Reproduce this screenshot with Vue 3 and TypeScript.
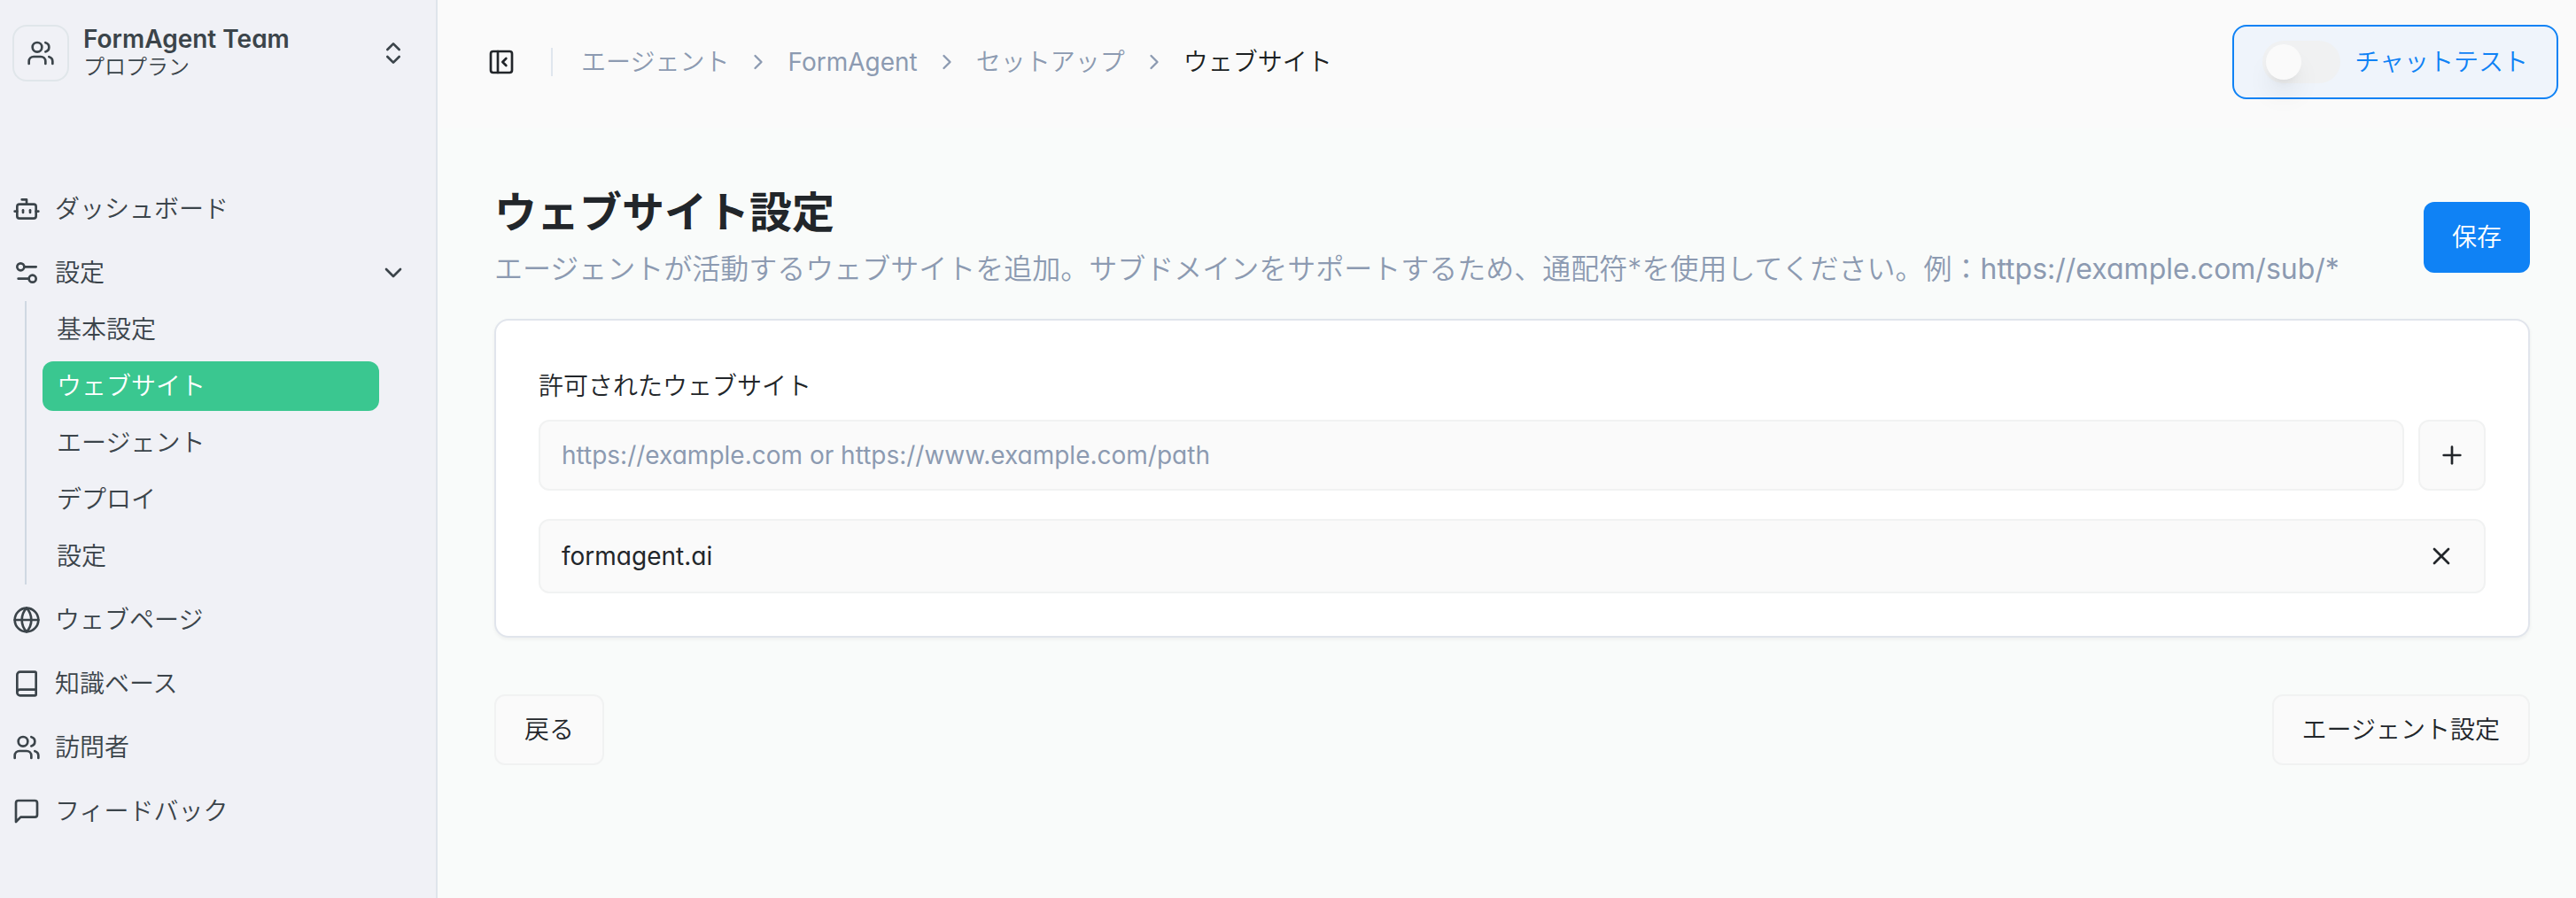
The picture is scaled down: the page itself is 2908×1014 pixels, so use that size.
<script setup lang="ts">
import { ref } from 'vue'

interface NavItem {
  label: string
  icon: string
  children?: { label: string; active?: boolean }[]
}

const icons: Record<string, string> = {
  users:
    '<path d="M16 21v-2a4 4 0 0 0-4-4H6a4 4 0 0 0-4 4v2"/><circle cx="9" cy="7" r="4"/><path d="M22 21v-2a4 4 0 0 0-3-3.87"/><path d="M16 3.13a4 4 0 0 1 0 7.75"/>',
  bot: '<path d="M12 8V4H8"/><rect width="16" height="12" x="4" y="8" rx="2"/><path d="M2 14h2"/><path d="M20 14h2"/><path d="M15 13v2"/><path d="M9 13v2"/>',
  settings: '<path d="M20 7H10"/><path d="M14 17H5"/><circle cx="17" cy="17" r="3"/><circle cx="7" cy="7" r="3"/>',
  globe:
    '<circle cx="12" cy="12" r="10"/><path d="M12 2a14.5 14.5 0 0 0 0 20 14.5 14.5 0 0 0 0-20"/><path d="M2 12h20"/>',
  book: '<path d="M4 19.500v-15A2.500 2.500 0 0 1 6.500 2H19a1 1 0 0 1 1 1v18a1 1 0 0 1-1 1H6.500a2.500 2.500 0 0 1 0-5H20"/>',
  message: '<path d="M21 15a2 2 0 0 1-2 2H7l-4 4V5a2 2 0 0 1 2-2h14a2 2 0 0 1 2 2z"/>',
  upDown: '<path d="m7 15 5 5 5-5"/><path d="m7 9 5-5 5 5"/>',
  down: '<path d="m6 9 6 6 6-6"/>',
  right: '<path d="m9 18 6-6-6-6"/>',
  panel: '<rect width="18" height="18" x="3" y="3" rx="2"/><path d="M9 3v18"/><path d="m16 15-3-3 3-3"/>',
  plus: '<path d="M5 12h14"/><path d="M12 5v14"/>',
  close: '<path d="M18 6 6 18"/><path d="m6 6 12 12"/>',
}

const nav: NavItem[] = [
  { label: 'ダッシュボード', icon: 'bot' },
  {
    label: '設定',
    icon: 'settings',
    children: [
      { label: '基本設定' },
      { label: 'ウェブサイト', active: true },
      { label: 'エージェント' },
      { label: 'デプロイ' },
      { label: '設定' },
    ],
  },
  { label: 'ウェブページ', icon: 'globe' },
  { label: '知識ベース', icon: 'book' },
  { label: '訪問者', icon: 'users' },
  { label: 'フィードバック', icon: 'message' },
]

const crumbs = [{ label: 'エージェント' }, { label: 'FormAgent', latin: true }, { label: 'セットアップ' }]

const chatTest = ref(false)
const draft = ref('')
const sites = ref(['formagent.ai'])

function addSite() {
  const value = draft.value.trim()
  if (value) sites.value.push(value)
  draft.value = ''
}

function removeSite(index: number) {
  sites.value.splice(index, 1)
}
</script>

<template>
  <div class="app">
    <aside class="sidebar">
      <button class="team" type="button">
        <span class="avatar"><svg class="icon" viewBox="0 0 24 24" v-html="icons.users" /></span>
        <span class="team-text">
          <strong>FormAgent Team</strong>
          <span class="plan">プロプラン</span>
        </span>
        <svg class="icon" viewBox="0 0 24 24" v-html="icons.upDown" />
      </button>
      <nav>
        <ul class="nav">
          <li v-for="item in nav" :key="item.label">
            <button v-if="item.children" class="nav-item" type="button" aria-expanded="true">
              <svg class="icon" viewBox="0 0 24 24" v-html="icons[item.icon]" />
              <span class="grow">{{ item.label }}</span>
              <svg class="icon" viewBox="0 0 24 24" v-html="icons.down" />
            </button>
            <a v-else class="nav-item" href="#">
              <svg class="icon" viewBox="0 0 24 24" v-html="icons[item.icon]" />
              <span>{{ item.label }}</span>
            </a>
            <ul v-if="item.children" class="subnav">
              <li v-for="child in item.children" :key="child.label">
                <a class="sub-item" :class="{ active: child.active }" href="#">{{ child.label }}</a>
              </li>
            </ul>
          </li>
        </ul>
      </nav>
    </aside>

    <div class="main">
      <header class="topbar">
        <button class="plain" type="button" aria-label="サイドバーを閉じる">
          <svg class="icon" viewBox="0 0 24 24" v-html="icons.panel" />
        </button>
        <span class="divider" />
        <ol class="crumbs">
          <li v-for="crumb in crumbs" :key="crumb.label">
            <a href="#" :class="{ latin: crumb.latin }">{{ crumb.label }}</a>
            <svg class="icon small" viewBox="0 0 24 24" v-html="icons.right" />
          </li>
          <li class="current">ウェブサイト</li>
        </ol>
        <label class="chat-test">
          <input v-model="chatTest" type="checkbox" role="switch" />
          <span>チャットテスト</span>
        </label>
      </header>

      <main class="content">
        <div class="heading">
          <div class="grow">
            <h1>ウェブサイト設定</h1>
            <p>エージェントが活動するウェブサイトを追加。サブドメインをサポートするため、通配符*を使用してください。例：<span class="latin">https://example.com/sub/*</span></p>
          </div>
          <button class="btn primary" type="button">保存</button>
        </div>

        <section class="card">
          <label for="site">許可されたウェブサイト</label>
          <form class="add-row" @submit.prevent="addSite">
            <input id="site" v-model="draft" class="latin" type="text" placeholder="https://example.com or https://www.example.com/path" />
            <button class="add" type="submit" aria-label="追加">
              <svg class="icon" viewBox="0 0 24 24" v-html="icons.plus" />
            </button>
          </form>
          <ul class="sites">
            <li v-for="(site, index) in sites" :key="site">
              <span class="grow latin">{{ site }}</span>
              <button class="plain remove" type="button" aria-label="削除" @click="removeSite(index)">
                <svg class="icon" viewBox="0 0 24 24" v-html="icons.close" />
              </button>
            </li>
          </ul>
        </section>

        <div class="footer">
          <button class="btn" type="button">戻る</button>
          <button class="btn" type="button">エージェント設定</button>
        </div>
      </main>
    </div>
  </div>
</template>

<style>
body {
  margin: 0;
}
</style>

<style scoped>
.app,
.app * {
  box-sizing: border-box;
}
.app {
  display: flex;
  min-height: 100vh;
  background: #f9fbfa;
  color: #22262a;
  font-family: Inter, "Noto Sans CJK JP", sans-serif;
  font-feature-settings: "cv11";
  font-size: 28px;
  font-weight: 350;
  line-height: 40px;
}
ul,
ol {
  margin: 0;
  padding: 0;
  list-style: none;
}
a {
  color: inherit;
  text-decoration: none;
}
button,
input {
  margin: 0;
  font: inherit;
  font-feature-settings: inherit;
  color: inherit;
}
button {
  cursor: pointer;
}
.icon {
  display: block;
  flex: none;
  width: 32px;
  height: 32px;
  fill: none;
  stroke: currentColor;
  stroke-width: 2;
  stroke-linecap: round;
  stroke-linejoin: round;
}
.icon.small {
  width: 28px;
  height: 28px;
}
.grow {
  flex: 1;
  min-width: 0;
}
.latin {
  font-weight: 400;
}
.plain {
  padding: 0;
  border: 0;
  background: none;
}

.sidebar {
  flex: none;
  width: 494px;
  padding: 28px 32px 28px 14px;
  border-right: 2px solid #dfe5eb;
  background: #f0f1f6;
  color: #3b444a;
}
.team {
  display: flex;
  align-items: center;
  gap: 16px;
  width: 100%;
  height: 64px;
  margin-bottom: 112px;
  padding: 0;
  border: 0;
  background: none;
  text-align: left;
}
.avatar {
  display: grid;
  place-items: center;
  width: 64px;
  height: 64px;
  border: 2px solid #e0e6ea;
  border-radius: 16px;
}
.team-text {
  display: flex;
  flex: 1;
  flex-direction: column;
  line-height: 32px;
}
.team-text strong {
  font-weight: 600;
}
.plan {
  font-size: 24px;
}
.nav {
  display: flex;
  flex-direction: column;
  gap: 8px;
}
.nav-item {
  display: flex;
  align-items: center;
  gap: 16px;
  width: 100%;
  height: 64px;
  padding: 0;
  border: 0;
  background: none;
  text-align: left;
}
.subnav {
  display: flex;
  flex-direction: column;
  gap: 8px;
  margin: 0 32px 0 14px;
  padding: 4px 0 4px 18px;
  border-left: 2px solid #cfd8e2;
}
.sub-item {
  display: block;
  padding: 8px 16px;
  border-radius: 12px;
}
.sub-item.active {
  background: #3ac790;
  color: #fff;
}

.main {
  flex: 1;
  min-width: 0;
}
.topbar {
  display: flex;
  align-items: center;
  padding: 28px 20px 32px 56px;
  background: #fafafa;
}
.divider {
  width: 2px;
  height: 32px;
  margin: 0 32px 0 40px;
  background: #dfe6ee;
}
.crumbs {
  display: flex;
  flex: 1;
  gap: 19px;
  color: #8c9ab1;
}
.crumbs li {
  display: flex;
  align-items: center;
  gap: 19px;
}
.crumbs .current {
  color: #1b1f22;
}
.chat-test {
  display: flex;
  align-items: center;
  gap: 16px;
  height: 84px;
  padding: 0 32px;
  border: 2px solid #0f82f5;
  border-radius: 16px;
  background: #eff4fb;
  color: #0f82f5;
  cursor: pointer;
}
.chat-test input {
  appearance: none;
  width: 88px;
  height: 48px;
  padding: 4px;
  border-radius: 24px;
  background: #f0f1f2;
}
.chat-test input::before {
  content: "";
  display: block;
  width: 40px;
  height: 40px;
  border-radius: 50%;
  background: #fafafa;
  box-shadow: 0 20px 30px -6px rgb(0 0 0 / 10%), 0 8px 12px -8px rgb(0 0 0 / 10%);
}
.chat-test input:checked::before {
  margin-left: 40px;
}

.content {
  padding: 64px 52px 64px 64px;
}
.heading {
  display: flex;
  align-items: center;
  gap: 32px;
  margin-bottom: 32px;
}
h1 {
  margin: 0;
  font-size: 48px;
  font-weight: 700;
  line-height: 64px;
}
p {
  margin: 8px 0 0;
  color: #8c9ab1;
  font-size: 32px;
  line-height: 48px;
}
.btn {
  height: 80px;
  padding: 0 32px;
  border: 2px solid #f1f2f2;
  border-radius: 12px;
  background: #fafafa;
}
.btn.primary {
  border: 0;
  background: #0f82f5;
  color: #fff;
}
.card {
  padding: 48px;
  border: 2px solid #e1e5ec;
  border-radius: 16px;
  background: #fff;
  box-shadow: 0 2px 4px rgb(0 0 0 / 5%);
}
.card label {
  display: block;
  margin-bottom: 12px;
  line-height: 52px;
}
.add-row {
  display: flex;
  gap: 16px;
  margin-bottom: 32px;
}
.add-row input {
  flex: 1;
  min-width: 0;
  height: 80px;
  padding: 0 24px;
  border: 2px solid #f1f2f2;
  border-radius: 12px;
  background: #fafafa;
}
.add-row .latin {
  font-weight: 400;
}
.add-row input::placeholder {
  color: #8c9ab1;
  opacity: 1;
}
.add {
  display: grid;
  place-items: center;
  width: 76px;
  padding: 0;
  border: 2px solid #f1f2f2;
  border-radius: 12px;
  background: #fafafa;
}
.sites {
  display: grid;
  gap: 16px;
}
.sites li {
  display: flex;
  align-items: center;
  height: 84px;
  padding: 0 24px;
  border: 2px solid #f1f2f2;
  border-radius: 12px;
  background: #fafafa;
}
.remove {
  display: grid;
  place-items: center;
  width: 48px;
  height: 48px;
}
.footer {
  display: flex;
  justify-content: space-between;
  margin-top: 64px;
}
</style>
